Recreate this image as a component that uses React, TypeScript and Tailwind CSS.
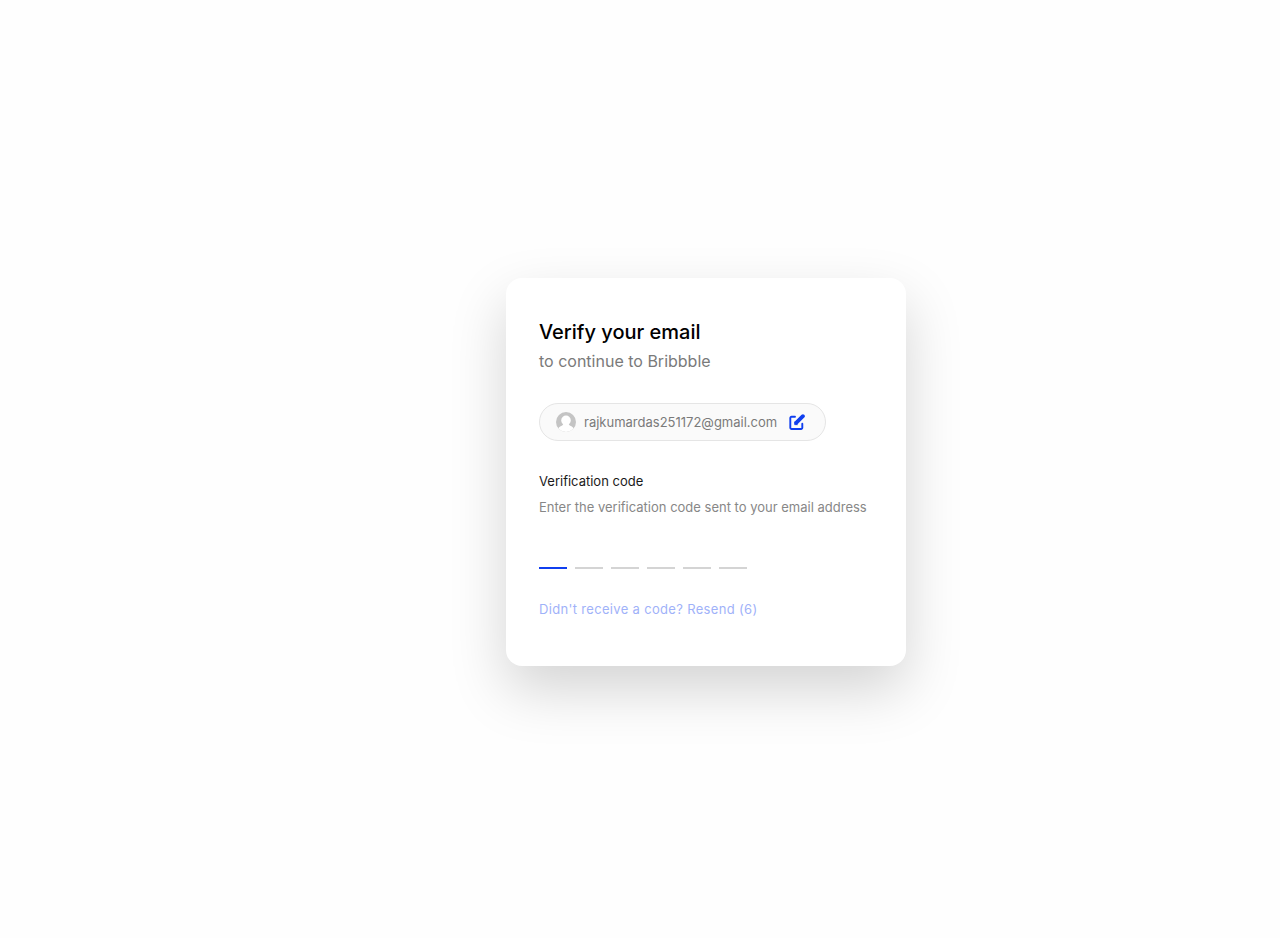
import { useState } from "react";

const CODE_LENGTH = 6;

function AvatarIcon() {
  return (
    <svg viewBox="0 0 20 20" className="size-5 shrink-0 rounded-full" aria-hidden="true">
      <rect width="20" height="20" fill="#c4c4c4" />
      <circle cx="10" cy="8.4" r="4.8" fill="#fff" />
      <path d="M7.4 11h5.2c0 1.6.7 2.3 2.2 3 1.5.7 2.6 1.6 3.2 3L16 20H4l-2-3c.6-1.4 1.7-2.3 3.2-3 1.5-.7 2.2-1.4 2.2-3Z" fill="#fff" />
    </svg>
  );
}

function EditIcon() {
  return (
    <svg viewBox="0 0 16 16" className="size-4" fill="none" stroke="#103fef" aria-hidden="true">
      <path d="M6 2.8H2.5a1.2 1.2 0 0 0-1.2 1.2v9.8a1.2 1.2 0 0 0 1.2 1.2h9.6a1.2 1.2 0 0 0 1.2-1.2V9.8" strokeWidth="1.9" strokeLinecap="round" strokeLinejoin="round" />
      <path d="M13.9 2.2 7.4 8.7" strokeWidth="3.8" strokeLinecap="round" />
      <path d="M5.6 7.8v2.9h2.9Z" fill="#103fef" strokeWidth=".6" strokeLinejoin="round" />
    </svg>
  );
}

export default function App() {
  const [digits, setDigits] = useState<string[]>(Array(CODE_LENGTH).fill(""));
  const active = Math.max(0, digits.findIndex((digit) => digit === ""));

  const updateDigit = (index: number, value: string) =>
    setDigits((current) => current.map((digit, i) => (i === index ? value : digit)));

  return (
    <main className="flex min-h-screen items-center justify-center bg-[#fefefe] pt-1.5 font-['Inter',sans-serif] sm:pl-33">
      <section className="w-full max-w-[400px] rounded-2xl bg-white px-[33px] pt-10 pb-[49px] shadow-[0_24px_56px_rgba(0,0,0,0.17)]">
        <header>
          <h1 className="text-xl leading-7 font-medium text-black">Verify your email</h1>
          <p className="mt-[3px] text-base leading-6 text-[#7a7a7a]">to continue to Bribbble</p>
        </header>

        <div className="mt-[30px] flex w-fit items-center rounded-full border border-[#e5e5e5] bg-[#fafafa] py-2 pr-5 pl-4">
          <AvatarIcon />
          <span className="ml-2 text-[13px] leading-5 text-[#7a7a7a]">rajkumardas251172@gmail.com</span>
          <button type="button" aria-label="Edit email" className="ml-3 cursor-pointer">
            <EditIcon />
          </button>
        </div>

        <form className="mt-[30px]">
          <fieldset>
            <legend className="text-[13px] leading-5 text-[#1a1a1a]">Verification code</legend>
            <p className="mt-1.5 text-[13px] leading-5 text-[#878787]">
              Enter the verification code sent to your email address
            </p>
            <div className="mt-4 flex gap-2">
              {digits.map((digit, index) => (
                <input
                  key={index}
                  aria-label={`Digit ${index + 1}`}
                  inputMode="numeric"
                  maxLength={1}
                  value={digit}
                  onChange={(event) => updateDigit(index, event.target.value)}
                  className={`h-9 w-7 border-b-2 text-center text-base outline-none ${
                    index === active ? "border-[#103fef]" : "border-[#d4d4d4]"
                  }`}
                />
              ))}
            </div>
          </fieldset>
          <button type="button" className="mt-8 block text-[13px] leading-4 tracking-wide text-[#9fb2f9]">
            Didn't receive a code? Resend (6)
          </button>
        </form>
      </section>
    </main>
  );
}
